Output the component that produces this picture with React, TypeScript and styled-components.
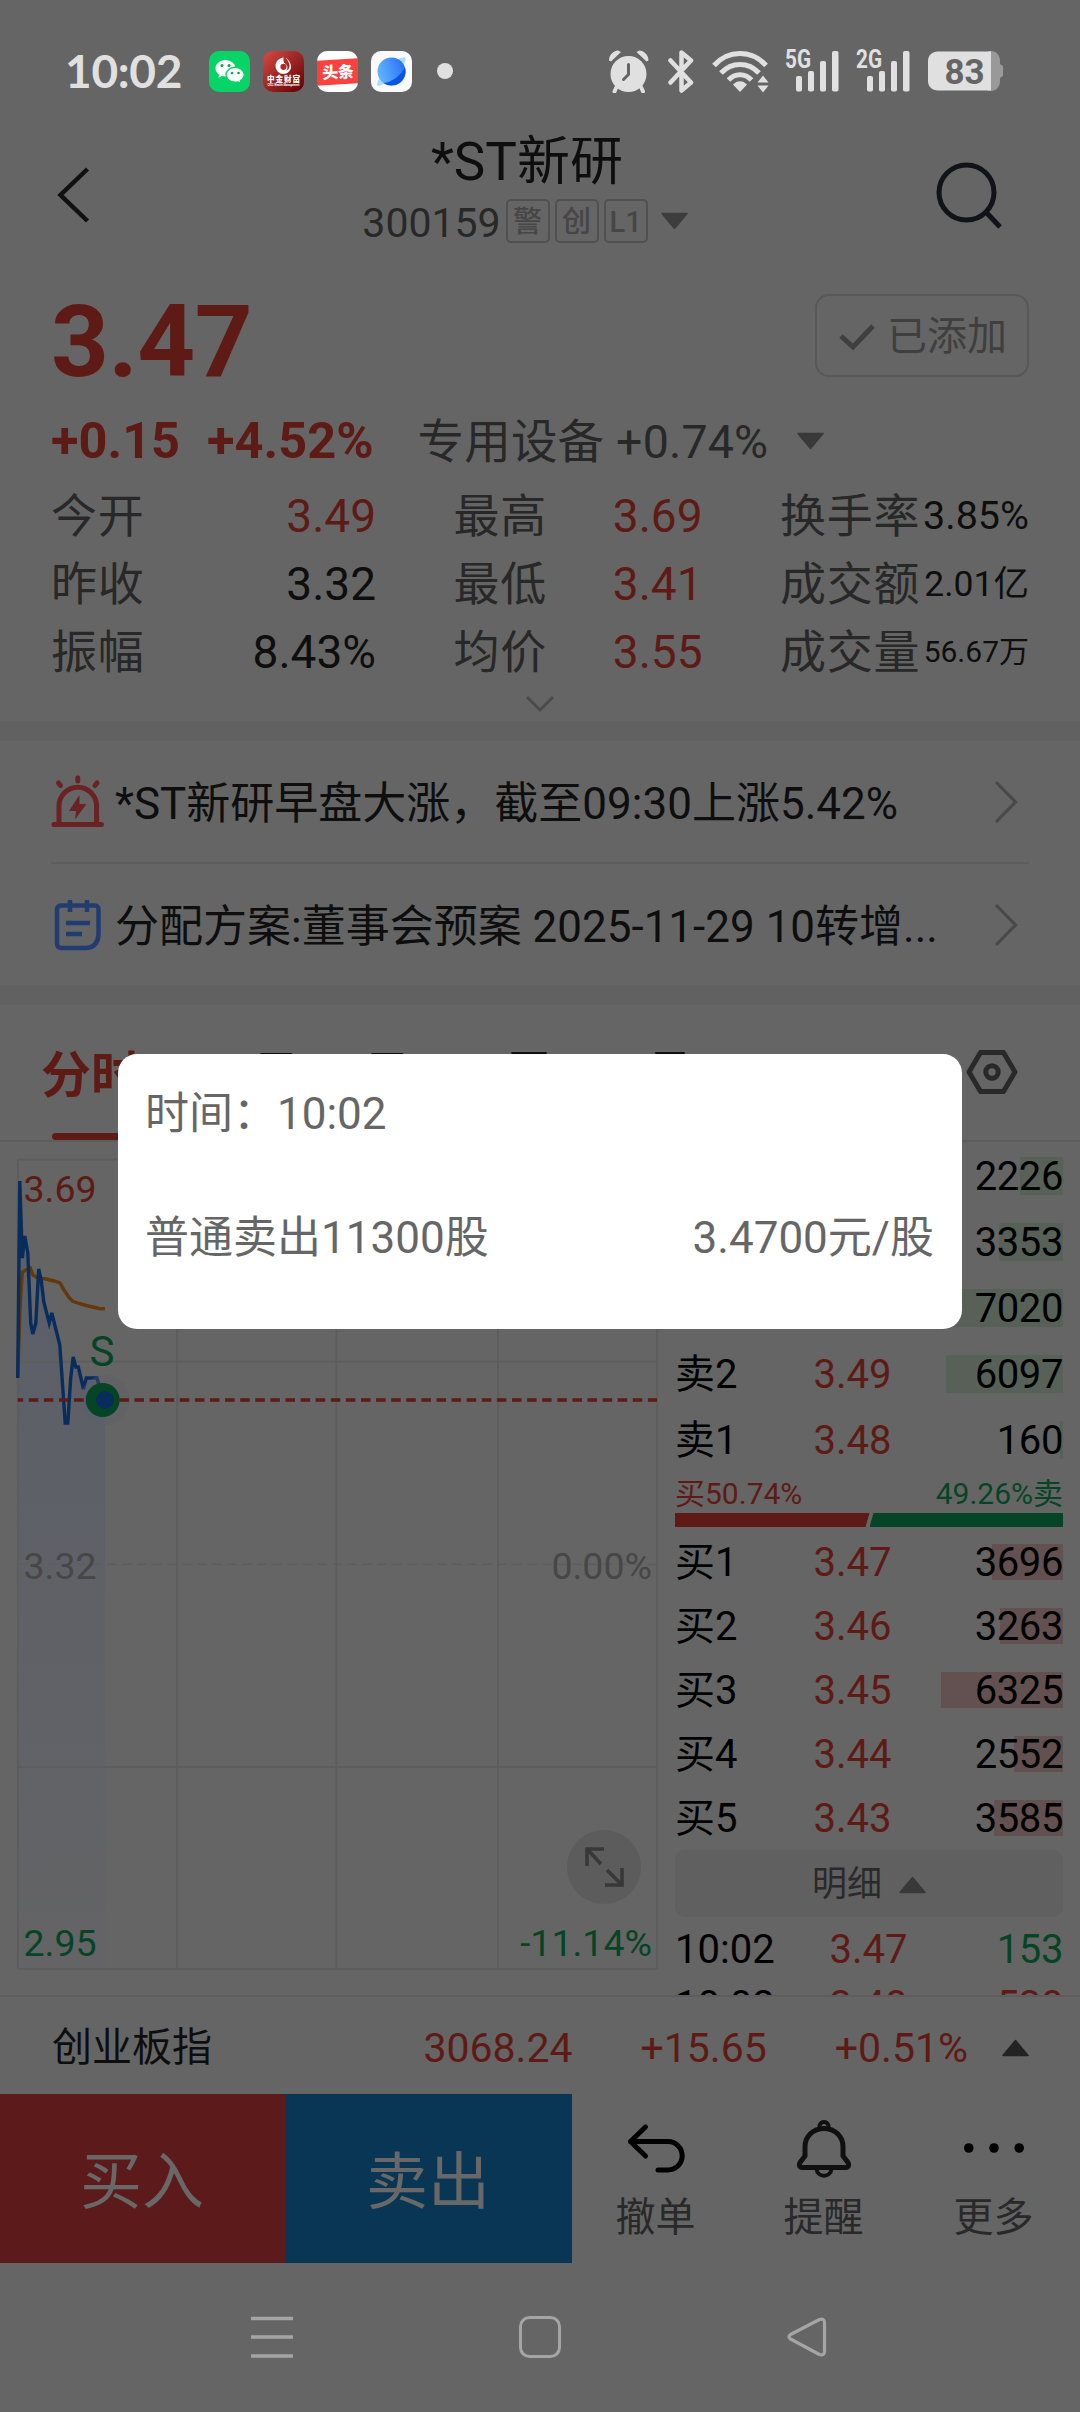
import React from "react";
import styled, { createGlobalStyle } from "styled-components";

const RED = "#5e1a14";
const GREEN = "#054526";
const INK = "#0e0e0e";
const MUTED = "#282828";
const LINE = "#5d5d5d";

const GlobalStyle = createGlobalStyle`
  * { box-sizing: border-box; }
  body { margin: 0; background: #656565; }
`;

const Screen = styled.div`
  position: relative;
  width: 1080px;
  height: 2412px;
  overflow: hidden;
  display: flex;
  flex-direction: column;
  background: #656565;
  color: ${INK};
  font-family: Roboto, "Noto Sans CJK SC", sans-serif;
  line-height: 1;
  svg { display: block; flex: none; }
`;

/* ---------- status bar ---------- */

const StatusBar = styled.div`
  display: flex;
  align-items: center;
  height: 120px;
  padding: 22px 77px 0 65px;
  color: #e0e0e0;
`;
const Clock = styled.div`
  width: 144px;
  font: 700 46px/56px Lato, sans-serif;
  letter-spacing: -0.3px;
`;
const AppIcons = styled.div`
  display: flex;
  align-items: center;
  gap: 13px;
`;
const StatusDot = styled.div`
  width: 16px;
  height: 16px;
  margin-left: 12px;
  border-radius: 50%;
  background: #e0e0e0;
`;
const SystemIcons = styled.div`
  display: flex;
  align-items: center;
  margin-left: auto;
`;
const Spacer = styled.div<{ $w: number }>`
  width: ${(p) => p.$w}px;
`;

function Signal({ label }: { label: string }) {
  return (
    <svg width="54" height="42" viewBox="0 0 54 42" fill="#e0e0e0" overflow="visible">
      <text x="0" y="18" fontSize="25" fontWeight="700" textLength="26" lengthAdjust="spacingAndGlyphs">{label}</text>
      <rect x="11" y="26" width="6" height="15.500" rx="1.800" />
      <rect x="23" y="21" width="6" height="20.500" rx="1.800" />
      <rect x="35" y="11" width="6" height="30.500" rx="1.800" />
      <rect x="47" y="1" width="6.500" height="40.500" rx="1.800" />
    </svg>
  );
}

function Status() {
  return (
    <StatusBar>
      <Clock>10:02</Clock>
      <AppIcons>
        <svg width="41" height="41" viewBox="0 0 41 41">
          <rect width="41" height="41" rx="10" fill="#07d467" />
          <path d="M16.500 9C11 9 6.500 12.700 6.500 17.300c0 2.600 1.400 4.900 3.700 6.400L9.300 27l3.600-1.900c1.200.3 2.400.5 3.600.5 5.500 0 10-3.700 10-8.300S22 9 16.500 9Z" fill="#fff" />
          <path d="M26.200 16.300c-5 0-9.200 3.400-9.200 7.500s4.100 7.500 9.200 7.500c1.100 0 2.100-.1 3-.4l3 1.600-.8-2.800c2.400-1.400 3.800-3.500 3.800-5.900 0-4.100-4-7.500-9-7.500Z" fill="#fff" stroke="#07d467" strokeWidth="1.400" />
          <g fill="#07a452">
            <circle cx="13" cy="14.500" r="1.500" /><circle cx="20" cy="14.500" r="1.500" />
            <circle cx="23" cy="22" r="1.300" /><circle cx="29.500" cy="22" r="1.300" />
          </g>
        </svg>
        <svg width="41" height="41" viewBox="0 0 41 41">
          <defs>
            <linearGradient id="cicc" x1="0" y1="0" x2="1" y2="1">
              <stop offset="0" stopColor="#d94a46" /><stop offset="1" stopColor="#5e0000" />
            </linearGradient>
          </defs>
          <rect width="41" height="41" rx="10" fill="url(#cicc)" />
          <path d="M20.500 6.500C16 7 12.500 10.600 12.500 15a8 8 0 0 0 8 8c4.200 0 7.500-3.200 7.500-7.200 0-4.600-3.500-8-5.500-9 2.500 2.600 4.300 5.500 4 8.800-.2 2-1.600 3.600-3.600 4.300 1.500-1.300 2-3.300 1.200-5.100-.9-1.800-3.400-2.300-3.600-4.700-.1-1.200 0-2.300 0-3.600Z" fill="#fff" />
          <circle cx="20.500" cy="15.800" r="3.100" fill="#b02b28" />
          <text x="4" y="30.700" fontSize="7.600" fontWeight="900" fill="#fff" textLength="33">中金财富</text>
          <text x="4.500" y="34.500" fontSize="3.300" fontWeight="700" fill="#fff" textLength="32" lengthAdjust="spacingAndGlyphs">CICC Wealth Management</text>
        </svg>
        <svg width="41" height="41" viewBox="0 0 41 41">
          <rect width="41" height="41" rx="10" fill="#fff" />
          <path d="M0 9.800 41 7.300v25L0 34.800Z" fill="#f9423d" />
          <text x="5" y="27" fontSize="16" fontWeight="900" fill="#fff" transform="rotate(-3 20 20)">头条</text>
        </svg>
        <svg width="41" height="41" viewBox="0 0 41 41">
          <defs>
            <linearGradient id="globe" x1="0" y1="0.600" x2="1" y2="0.300">
              <stop offset="0" stopColor="#62b8ff" /><stop offset="1" stopColor="#2a6ef5" />
            </linearGradient>
          </defs>
          <rect width="41" height="41" rx="10" fill="#fafafa" />
          <path d="M6.500 34.500C4.500 32 12 20 21 12.500 28 7 33.500 5 34.500 7c1.500 4-6 13-14 19.500C14 32 8.500 36 6.500 34.500Z" fill="#a9dcff" />
          <circle cx="20.500" cy="20.500" r="14" fill="url(#globe)" />
          <path d="M34 16.500C30 24 21 31.500 12.500 32a14 14 0 0 0 21.500-15.500Z" fill="#0954e2" />
        </svg>
      </AppIcons>
      <Spacer $w={13} />
      <StatusDot />
      <SystemIcons>
        <svg width="42" height="43" viewBox="0 0 42 43" fill="#e0e0e0">
          <circle cx="20.500" cy="24" r="18" />
          <path d="M1 10.500C1 5 5 1 10 .5l3 1.500L3 11.500ZM40.500 10.500C40.500 5 36.500 1 31.500.5l-3 1.500 10 9.500Z" />
          <path d="m9 36-2.500 5.500M32.500 36l2.500 5.500" stroke="#e0e0e0" strokeWidth="4" strokeLinecap="round" />
          <path d="M20.500 14.500v10l-5 5" stroke="#656565" strokeWidth="3" fill="none" strokeLinecap="round" />
        </svg>
        <Spacer $w={18} />
        <svg width="26" height="43" viewBox="0 0 26 43" fill="none" stroke="#e0e0e0" strokeWidth="4.500" strokeLinejoin="round" strokeLinecap="round">
          <path d="m2.500 10.500 20.500 22-9.500 8V2.500l9.500 8-20.500 22" />
        </svg>
        <Spacer $w={18} />
        <svg width="58" height="43" viewBox="0 0 58 43">
          <g fill="none" stroke="#e0e0e0" strokeWidth="5">
            <path d="M2 15.500C16-.5 40-.5 54 15.500" />
            <path d="M9 23c10.500-11.500 27.500-11.500 38 0" />
            <path d="M16.500 30c6.500-7 16.500-7 23 0" />
          </g>
          <path d="M21 34.500c4-4.500 10-4.500 14 0L28 42Z" fill="#e0e0e0" />
          <path d="m45.500 32.500 5.500-7 5.500 7ZM45.500 35.500l5.500 7 5.500-7Z" fill="#e0e0e0" />
        </svg>
        <Spacer $w={15} />
        <Signal label="5G" />
        <Spacer $w={17} />
        <Signal label="2G" />
        <Spacer $w={18} />
        <svg width="75" height="40" viewBox="0 0 75 40">
          <path d="M60 0h3c5 0 9 4 9 10v3l3 2v10l-3 2v3c0 6-4 10-9 10h-3Z" fill="#999" />
          <path d="M10 .5h53v39H10C4 39.500 0 35.500 0 30V10C0 4.500 4 .5 10 .5Z" fill="#e0e0e0" />
          <text x="16.500" y="32.500" fontSize="35" fontWeight="700" fill="#656565" textLength="40">83</text>
        </svg>
      </SystemIcons>
    </StatusBar>
  );
}

/* ---------- title bar ---------- */

const TitleBar = styled.header`
  display: grid;
  grid-template-columns: 120px 1fr 148px;
  align-items: center;
  height: 150px;
`;
const TitleBlock = styled.div`
  display: flex;
  flex-direction: column;
  align-items: center;
  gap: 7px;
  padding-bottom: 15px;
`;
const Title = styled.h1`
  margin: 0 0 0 2px;
  font-size: 53px;
  font-weight: 400;
  line-height: 60px;
`;
const CodeRow = styled.div`
  display: flex;
  align-items: center;
  gap: 5px;
  height: 44px;
  margin-right: 2px;
  font-size: 41px;
  line-height: 44px;
  color: ${MUTED};
`;
const Code = styled.span`
  padding-top: 4px;
`;
const Tag = styled.span`
  display: flex;
  align-items: center;
  justify-content: center;
  width: 44px;
  height: 44px;
  padding-top: 2px;
  border: 2px solid #505050;
  border-radius: 5px;
  font-size: 29px;
  font-weight: 500;
  line-height: 38px;
  color: #464646;
`;

function Caret({ up, color = "#3d3d3d" }: { up?: boolean; color?: string }) {
  return (
    <svg width="27" height="18" viewBox="0 0 27 18">
      <path d={up ? "M13.500 1.500 26 16.500H1Z" : "M13.500 16.500 26 1.500H1Z"} fill={color} stroke={color} strokeWidth="1.500" strokeLinejoin="round" />
    </svg>
  );
}

/* ---------- quote ---------- */

const Quote = styled.section`
  display: flex;
  flex-direction: column;
  height: 451px;
  padding: 24px 51px 0;
`;
const PriceRow = styled.div`
  display: flex;
  justify-content: space-between;
  height: 83px;
`;
const Price = styled.div`
  margin-top: 6px;
  font-size: 101px;
  font-weight: 700;
  line-height: 83px;
  letter-spacing: -0.500px;
  color: ${RED};
`;
const AddedButton = styled.button`
  display: flex;
  align-items: center;
  gap: 12px;
  width: 214px;
  height: 83px;
  padding: 3px 0 0 22px;
  border: 2px solid #585858;
  border-radius: 14px;
  background: none;
  font: 400 40px/50px Roboto, "Noto Sans CJK SC", sans-serif;
  color: #3f3f3f;
`;
const ChangeRow = styled.div`
  display: flex;
  align-items: center;
  height: 60px;
  margin-top: 34px;
  line-height: 60px;
`;
const Change = styled.span`
  margin-right: 27px;
  font-size: 50.500px;
  font-weight: 700;
  color: ${RED};
`;
const Sector = styled.span`
  margin: 0 29px 0 17px;
  padding-top: 2px;
  font-size: 46.500px;
  letter-spacing: 0.200px;
  color: ${MUTED};
`;
const Stats = styled.div`
  display: grid;
  grid-template-columns: 325px 249px 249px;
  column-gap: 77.500px;
  grid-auto-rows: 68px;
  margin-top: 11px;
`;
const Stat = styled.div`
  display: flex;
  align-items: center;
  justify-content: space-between;
  font-size: 46px;
  line-height: 68px;
  color: ${MUTED};
  white-space: nowrap;
`;
const StatLabel = styled.span`
  letter-spacing: 0.700px;
`;
const StatValue = styled.span<{ $red?: boolean; $size?: number }>`
  font-size: ${(p) => p.$size ?? 46}px;
  color: ${(p) => (p.$red ? RED : INK)};
`;
const ExpandHandle = styled.div`
  display: flex;
  justify-content: center;
  margin-top: 9px;
`;
const Band = styled.div`
  flex: none;
  height: 20px;
  background: #616161;
`;

const stats: { label: string; value: string; red?: boolean; size?: number }[] = [
  { label: "今开", value: "3.49", red: true },
  { label: "最高", value: "3.69", red: true },
  { label: "换手率", value: "3.85%", size: 39.5 },
  { label: "昨收", value: "3.32" },
  { label: "最低", value: "3.41", red: true },
  { label: "成交额", value: "2.01亿", size: 35.5 },
  { label: "振幅", value: "8.43%" },
  { label: "均价", value: "3.55", red: true },
  { label: "成交量", value: "56.67万", size: 30 },
];

/* ---------- news ---------- */

const News = styled.section`
  display: flex;
  flex-direction: column;
  height: 244px;
  padding: 0 51px;
`;
const NewsRow = styled.div`
  display: flex;
  align-items: center;
  flex: 1;
  gap: 11px;
  padding-right: 11px;
  font-size: 44px;
  white-space: nowrap;
  & + & { border-top: 2px solid ${LINE}; }
`;
const NewsText = styled.div`
  flex: 1;
  padding-top: 4px;
  line-height: 60px;
`;

function ArrowRight() {
  return (
    <svg width="23" height="42" viewBox="0 0 23 42" fill="none" stroke="#494949" strokeWidth="3.200" strokeLinecap="round">
      <path d="m2 2 18.500 19L2 40" />
    </svg>
  );
}

/* ---------- tabs ---------- */

const Tabs = styled.nav`
  display: flex;
  align-items: center;
  gap: 63px;
  height: 137px;
  flex: none;
  padding: 0 62px 0 41px;
  border-bottom: 2px solid ${LINE};
`;
const Tab = styled.div<{ $active?: boolean }>`
  display: flex;
  flex-direction: column;
  align-items: center;
  justify-content: space-between;
  height: 135px;
  padding-top: ${(p) => (p.$active ? 41 : 39)}px;
  font-size: ${(p) => (p.$active ? 50 : 48)}px;
  font-weight: ${(p) => (p.$active ? 700 : 400)};
  line-height: 60px;
  color: ${(p) => (p.$active ? RED : INK)};
  &::after {
    content: "";
    width: 78px;
    height: 7px;
    border-radius: 4px;
    background: ${(p) => (p.$active ? RED : "transparent")};
  }
`;
const TabSettings = styled.div`
  margin: 0 0 2px auto;
`;

/* ---------- chart and order book ---------- */

const Market = styled.main`
  display: flex;
  flex: none;
  height: 853px;
  padding-top: 1px;
  overflow: hidden;
`;
const ChartPane = styled.div`
  position: relative;
  width: 675px;
  flex: none;
`;
const AxisLabels = styled.div`
  display: flex;
  justify-content: space-between;
  width: 650px;
  padding: 17px 0 0 26px;
  font-size: 37px;
  line-height: 40px;
  color: #474747;
`;
const ZoomButton = styled.div`
  position: absolute;
  left: 567px;
  top: 687px;
  display: flex;
  align-items: center;
  justify-content: center;
  width: 74px;
  height: 74px;
  border-radius: 50%;
  background: #5c5c5c;
`;

const pricePoints =
  "17.700,235 19.800,38 22.300,115 24.800,93 27.800,110 30.700,180 32.800,191 35.800,180 38.700,126 41.200,137 43.800,159 49.200,180 51.800,170 59.800,202 65.200,280 67.800,280 70.700,235 73.200,214 75.800,224 78.300,224 83.500,246 86.300,235 97,235 100,246 104.800,257";
const averagePoints =
  "17.700,235 20,165 22.300,129 26,127 30.300,125 33,132 37.900,135 46,136 54,138 60,140 64,147 68.600,154 72.400,158 79,160.500 86.300,162.500 99,165.500 104.800,165.700";

function Chart() {
  return (
    <svg width="675" height="832" viewBox="0 0 675 832">
      <defs>
        <linearGradient id="area" x1="0" y1="0" x2="0" y2="1">
          <stop offset="0" stopColor="#5a5e68" />
          <stop offset="1" stopColor="#646466" />
        </linearGradient>
      </defs>
      <polygon points={`${pricePoints} 104.800,826 17.700,826`} fill="url(#area)" />
      <g stroke={LINE} strokeWidth="1.800" fill="none">
        <path d="M17.700 16.500H657M17.700 218.700H657M17.700 624H657M17.700 826H657" />
        <path d="M17.700 16.500V826M177.200 16.500V826M336.300 16.500V826M498 16.500V826M657 16.500V826" />
        <path d="M17.700 421.300H657" strokeDasharray="9 6" strokeWidth="1.200" />
      </g>
      <polyline points={averagePoints} fill="none" stroke="#63380a" strokeWidth="3.400" />
      <polyline points={pricePoints} fill="none" stroke="#082d5c" strokeWidth="3.400" />
      <circle cx="105" cy="257" r="25" fill="#5a5e68" opacity="0.350" />
      <path d="M17.700 257H657" stroke={RED} strokeWidth="3.400" strokeDasharray="9.500 5.600" strokeDashoffset="4" />
      <circle cx="102.700" cy="257" r="17" fill={GREEN} />
      <circle cx="105" cy="257" r="9" fill="#082d5c" />
      <g fontSize="37.500">
        <text x="89.500" y="223" fontSize="42" fill={GREEN}>S</text>
        <text x="23.500" y="59" fill={RED}>3.69</text>
        <text x="23.500" y="436" fill="#474747">3.32</text>
        <text x="652" y="436" fill="#474747" textAnchor="end">0.00%</text>
        <text x="23.500" y="813" fill={GREEN}>2.95</text>
        <text x="652" y="813" fill={GREEN} textAnchor="end">-11.14%</text>
      </g>
    </svg>
  );
}

const Book = styled.div`
  display: flex;
  flex-direction: column;
  flex: none;
  width: 388px;
`;
const BookRow = styled.div<{ $h: number; $first?: number }>`
  display: grid;
  grid-template-columns: ${(p) => p.$first ?? 130}px 95px 1fr;
  align-items: center;
  flex: none;
  height: ${(p) => p.$h}px;
  font-size: 40px;
  line-height: 52px;
  color: #010101;
  & > * { grid-row: 1; }
`;
const Level = styled.span`
  grid-column: 1;
  padding-top: 2px;
`;
const LevelPrice = styled.span`
  grid-column: 2;
  padding-top: 2px;
  text-align: center;
  color: ${RED};
`;
const Volume = styled.span<{ $color?: string }>`
  grid-column: 3;
  z-index: 1;
  padding-top: 2px;
  text-align: right;
  letter-spacing: -0.400px;
  color: ${(p) => p.$color ?? "#010101"};
`;
const VolumeBar = styled.span<{ $buy?: boolean }>`
  grid-column: 3;
  justify-self: end;
  height: ${(p) => (p.$buy ? 36 : 38)}px;
  background: ${(p) => (p.$buy ? "#625150" : "#586158")};
`;
const RatioLabels = styled.div`
  display: flex;
  justify-content: space-between;
  height: 40px;
  font-size: 30px;
  line-height: 41px;
`;
const Side = styled.span<{ $buy?: boolean }>`
  color: ${(p) => (p.$buy ? RED : GREEN)};
`;
const RatioBar = styled.div`
  display: flex;
  height: 14px;
  margin-bottom: 3px;
  flex: none;
`;
const BuyShare = styled.div`
  width: 194.500px;
  background: ${RED};
  clip-path: polygon(0 0, 100% 0, calc(100% - 4px) 100%, 0 100%);
`;
const SellShare = styled.div`
  flex: 1;
  background: ${GREEN};
  clip-path: polygon(4px 0, 100% 0, 100% 100%, 0 100%);
`;
const DetailButton = styled.div`
  display: flex;
  align-items: center;
  justify-content: center;
  gap: 17px;
  flex: none;
  height: 67px;
  margin-bottom: 4px;
  padding-top: 2px;
  border-radius: 10px;
  background: #606060;
  font-size: 35px;
  line-height: 46px;
  color: #2a2a2a;
`;

type LevelData = { level?: string; price?: string; volume: number };

const sells: LevelData[] = [
  { volume: 2226 },
  { volume: 3353 },
  { volume: 7020 },
  { level: "卖2", price: "3.49", volume: 6097 },
  { level: "卖1", price: "3.48", volume: 160 },
];
const buys: LevelData[] = [
  { level: "买1", price: "3.47", volume: 3696 },
  { level: "买2", price: "3.46", volume: 3263 },
  { level: "买3", price: "3.45", volume: 6325 },
  { level: "买4", price: "3.44", volume: 2552 },
  { level: "买5", price: "3.43", volume: 3585 },
];

function Levels({ rows, buy }: { rows: LevelData[]; buy?: boolean }) {
  return (
    <>
      {rows.map(({ level, price, volume }) => (
        <BookRow key={volume} $h={buy ? 64 : 66}>
          <Level>{level}</Level>
          <LevelPrice>{price}</LevelPrice>
          <VolumeBar $buy={buy} style={{ width: volume * 0.01924 }} />
          <Volume>{volume}</Volume>
        </BookRow>
      ))}
    </>
  );
}

/* ---------- bottom ---------- */

const IndexBar = styled.div`
  display: flex;
  align-items: center;
  flex: none;
  height: 99px;
  padding: 5px 51px 0 52px;
  border-top: 2px solid ${LINE};
  font-size: 41px;
  line-height: 56px;
`;
const IndexName = styled.span`
  flex: 1;
  font-size: 40px;
`;
const IndexValue = styled.span<{ $gap: number }>`
  margin-right: ${(p) => p.$gap}px;
  color: ${RED};
`;
const ActionBar = styled.div`
  display: flex;
  flex: none;
  height: 169px;
`;
const TradeButton = styled.button<{ $buy?: boolean }>`
  width: 286px;
  padding: 9px 2px 0 0;
  border: 0;
  background: ${(p) => (p.$buy ? "#5d1a1b" : "#093654")};
  font: 400 62px/80px Roboto, "Noto Sans CJK SC", sans-serif;
  color: #686868;
`;
const Actions = styled.div`
  display: grid;
  grid-template-columns: 167px 169px 171px;
`;
const Action = styled.div`
  display: flex;
  flex-direction: column;
  align-items: center;
  padding-top: 23px;
  gap: 11px;
  font-size: 40px;
  line-height: 52px;
  color: #292929;
`;
const SystemNav = styled.div`
  display: flex;
  align-items: center;
  justify-content: space-between;
  width: 577px;
  margin: 52px 0 0 251px;
  height: 44px;
`;

/* ---------- dialog ---------- */

const Dialog = styled.div`
  position: absolute;
  left: 118px;
  top: 1054px;
  width: 844px;
  height: 275px;
  padding: 30px 28px 0 27px;
  border-radius: 19px;
  background: #fff;
  font-size: 44px;
  line-height: 60px;
  color: #666;
`;
const DialogLine = styled.div`
  display: flex;
  justify-content: space-between;
  & + & { margin-top: 64px; }
`;

export default function App() {
  return (
    <Screen>
      <GlobalStyle />
      <Status />
      <TitleBar>
        <svg width="120" height="56" viewBox="0 0 120 56" fill="none" stroke="#111" strokeWidth="4.500">
          <path d="M87.500 2 60.500 28l27 26" />
        </svg>
        <TitleBlock>
          <Title>*ST新研</Title>
          <CodeRow>
            <Code>300159</Code>
            <Tag>警</Tag>
            <Tag>创</Tag>
            <Tag>L1</Tag>
            <Spacer $w={3} />
            <Caret />
          </CodeRow>
        </TitleBlock>
        <svg width="74" height="74" viewBox="0 0 74 74" fill="none" stroke="#111318" strokeWidth="5">
          <circle cx="34.500" cy="34.500" r="27.500" />
          <path d="m54 54 14 15" />
        </svg>
      </TitleBar>

      <Quote>
        <PriceRow>
          <Price>3.47</Price>
          <AddedButton>
            <svg width="36" height="28" viewBox="0 0 36 28" fill="none" stroke="#3f3f3f" strokeWidth="5">
              <path d="m2 13 12 11L34 3" />
            </svg>
            已添加
          </AddedButton>
        </PriceRow>
        <ChangeRow>
          <Change>+0.15</Change>
          <Change>+4.52%</Change>
          <Sector>专用设备 +0.74%</Sector>
          <Caret color="#393939" />
        </ChangeRow>
        <Stats>
          {stats.map((s) => (
            <Stat key={s.label}>
              <StatLabel>{s.label}</StatLabel>
              <StatValue $red={s.red} $size={s.size}>{s.value}</StatValue>
            </Stat>
          ))}
        </Stats>
        <ExpandHandle>
          <svg width="30" height="18" viewBox="0 0 30 18" fill="none" stroke="#4a4a4a" strokeWidth="3">
            <path d="m2 2 13 13L28 2" />
          </svg>
        </ExpandHandle>
      </Quote>

      <Band />
      <News>
        <NewsRow>
          <svg width="53" height="54" viewBox="0 0 53 54" fill="none" stroke="#6b2222" strokeWidth="5" strokeLinecap="round">
            <path d="M8 48V31a18.800 18.800 0 0 1 37.600 0v17M3 49.500h47.500" />
            <path d="M26.800 3v3M7.500 8l2 2.500M46 8l-2 2.500" />
            <path d="M28.500 20 18 36h7l-1 8.500L35.500 29h-7Z" fill="#6b2222" stroke="none" />
          </svg>
          <NewsText>*ST新研早盘大涨，截至09:30上涨5.42%</NewsText>
          <ArrowRight />
        </NewsRow>
        <NewsRow>
          <svg width="53" height="54" viewBox="0 0 53 54" fill="none" stroke="#223c72" strokeWidth="4.500">
            <path d="M10 7.500h34a3.500 3.500 0 0 1 3.500 3.500v26q-1 12-12 13H10a4 4 0 0 1-4-4V11.500a4 4 0 0 1 4-4Z" strokeLinejoin="round" />
            <path d="M19 2v12M36 2v12M15 25h24M15 36h16" />
          </svg>
          <NewsText>分配方案:董事会预案 2025-11-29 10转增...</NewsText>
          <ArrowRight />
        </NewsRow>
      </News>
      <Band />

      <Tabs>
        <Tab $active>分时</Tab>
        <Tab>五日</Tab>
        <Tab>日K</Tab>
        <Tab>周K</Tab>
        <Tab>月K</Tab>
        <TabSettings>
          <svg width="52" height="46" viewBox="0 0 52 46" fill="none" stroke="#292929" strokeWidth="5" strokeLinejoin="round">
            <path d="M14.500 3.500h23L49 23 37.500 42.500h-23L3 23Z" />
            <circle cx="26" cy="23" r="6.200" />
          </svg>
        </TabSettings>
      </Tabs>

      <Market>
        <ChartPane>
          <Chart />
          <AxisLabels>
            <span>09:30</span>
            <span>11:30/13:00</span>
            <span>15:00</span>
          </AxisLabels>
          <ZoomButton>
            <svg width="42" height="42" viewBox="0 0 42 42" fill="none" stroke="#383838" strokeWidth="3.600">
              <path d="M4 20V3h17M4 3l14 15M22 39h17V22M39 39 24 24" />
            </svg>
          </ZoomButton>
        </ChartPane>
        <Book>
          <Levels rows={sells} />
          <RatioLabels>
            <Side $buy>买50.74%</Side>
            <Side>49.26%卖</Side>
          </RatioLabels>
          <RatioBar>
            <BuyShare />
            <SellShare />
          </RatioBar>
          <Levels rows={buys} buy />
          <DetailButton>
            明细
            <Caret up color="#393939" />
          </DetailButton>
          <BookRow $h={56} $first={146}>
            <Level>10:02</Level>
            <LevelPrice>3.47</LevelPrice>
            <Volume $color={GREEN}>153</Volume>
          </BookRow>
          <BookRow $h={56} $first={146}>
            <Level>10:02</Level>
            <LevelPrice>3.48</LevelPrice>
            <Volume $color={RED}>530</Volume>
          </BookRow>
        </Book>
      </Market>

      <IndexBar>
        <IndexName>创业板指</IndexName>
        <IndexValue $gap={68}>3068.24</IndexValue>
        <IndexValue $gap={68}>+15.65</IndexValue>
        <IndexValue $gap={34}>+0.51%</IndexValue>
        <Caret up color="#232323" />
      </IndexBar>
      <ActionBar>
        <TradeButton $buy>买入</TradeButton>
        <TradeButton>卖出</TradeButton>
        <Actions>
          <Action>
            <svg width="60" height="64" viewBox="0 0 60 64" fill="none" stroke="#010101" strokeWidth="5" strokeLinecap="round" strokeLinejoin="round">
              <path d="M19.500 10 4.500 24.500l15 14.500M4.500 24.500H42a14.200 14.200 0 0 1 0 28.400H32" />
            </svg>
            撤单
          </Action>
          <Action>
            <svg width="60" height="64" viewBox="0 0 60 64" fill="none" stroke="#101010" strokeWidth="5" strokeLinejoin="round">
              <path d="M30 11.500c-11 0-19 8-19 18.500v9l-5 6.500c-1.500 2.500-.5 5 2 5h44c2.500 0 3.500-2.500 2-5L49 39v-9c0-10.500-8-18.500-19-18.500Z" />
              <path d="M25.500 10.500a4.600 4.600 0 1 1 9 0M22.500 52c1 9 14 9 15 0" strokeWidth="4" />
            </svg>
            提醒
          </Action>
          <Action>
            <svg width="60" height="64" viewBox="0 0 60 64" fill="#010101">
              <circle cx="4.800" cy="31" r="4.800" />
              <circle cx="30" cy="31" r="4.800" />
              <circle cx="55.200" cy="31" r="4.800" />
            </svg>
            更多
          </Action>
        </Actions>
      </ActionBar>

      <SystemNav>
        <svg width="42" height="44" viewBox="0 0 42 44" stroke="#a5a5a5" strokeWidth="3.600">
          <path d="M0 3.500h42M0 22h42M0 41h42" />
        </svg>
        <svg width="42" height="44" viewBox="0 0 42 44" fill="none" stroke="#a5a5a5" strokeWidth="3">
          <rect x="1.500" y="2.500" width="39" height="39" rx="9" />
        </svg>
        <svg width="42" height="44" viewBox="0 0 42 44" fill="none" stroke="#a5a5a5" strokeWidth="3.200" strokeLinejoin="round">
          <path d="M33.500 4.500 4.500 19.500q-3 2 0 4.500l29 15.500q5 1.500 5-3V7.500q0-4.500-5-3Z" />
        </svg>
      </SystemNav>

      <Dialog>
        <DialogLine>
          <span>时间：10:02</span>
        </DialogLine>
        <DialogLine>
          <span>普通卖出11300股</span>
          <span>3.4700元/股</span>
        </DialogLine>
      </Dialog>
    </Screen>
  );
}
